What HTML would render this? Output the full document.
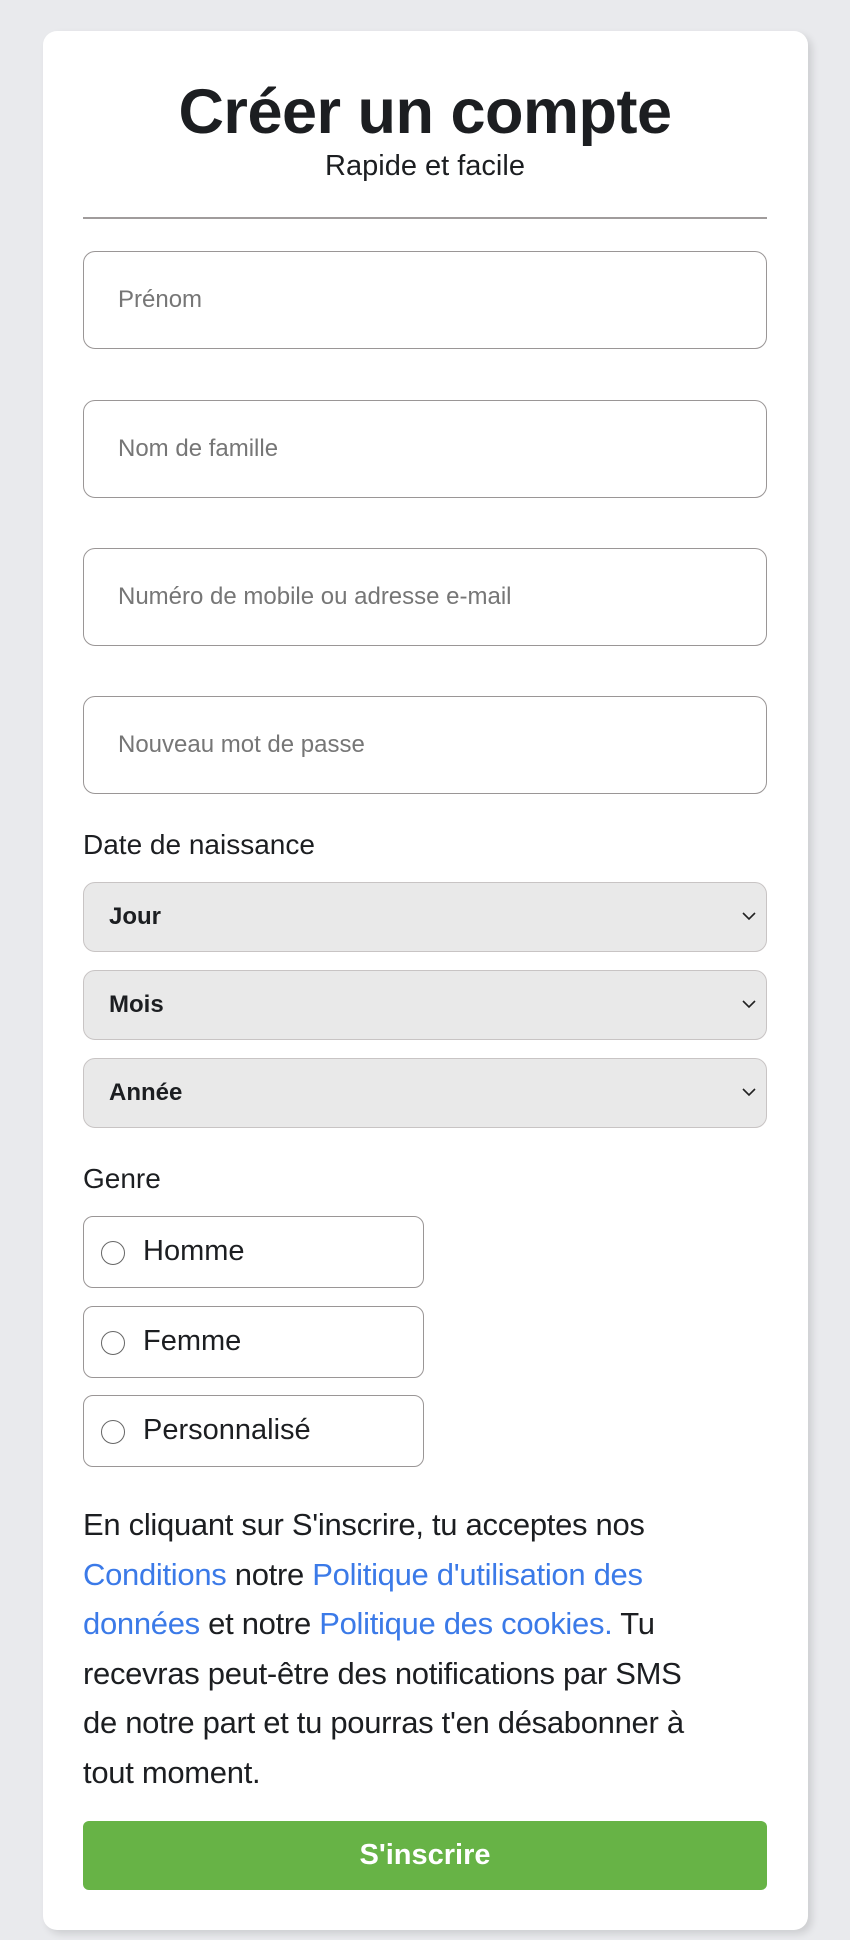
<!DOCTYPE html>
<html><head><meta charset="utf-8"><style>
*{box-sizing:border-box;margin:0;padding:0}
body{width:850px;height:1940px;background:#e9eaed;font-family:"Liberation Sans",sans-serif;color:#1c1e21;position:relative;overflow:hidden}
.card{position:absolute;left:43px;top:31px;width:765px;height:1899px;background:#fff;border-radius:14px;box-shadow:4px 4px 8px rgba(0,0,0,.12)}
.a{position:absolute}
h1{position:absolute;left:0;width:850px;top:76px;text-align:center;font-size:63px;font-weight:bold;letter-spacing:-0.5px}
.sub{left:0;width:850px;top:150px;text-align:center;font-size:29px}
.hr{left:83px;width:684px;top:217px;height:2px;background:#a09c9c}
.in{left:83px;width:684px;height:98px;border:1.5px solid #9a9696;border-radius:12px;font-size:24px;color:#767676;padding-left:34px;line-height:95px}
.lbl{left:83px;font-size:28px}
.sel{left:83px;width:684px;height:70px;background:#e9e9e9;border:1.5px solid #c8c4c4;border-radius:12px;font-size:24px;font-weight:bold;padding-left:25px;line-height:67px}
.sel svg{position:absolute;right:10px;top:28px}
.rad{left:83px;width:341px;height:72px;border:1.5px solid #9a9696;border-radius:10px;font-size:29px;line-height:69px;padding-left:59px}
.rad:before{content:"";position:absolute;left:17px;top:24px;width:22px;height:22px;border:1.5px solid #666;border-radius:50%}
.terms{left:83px;top:1500px;width:760px;font-size:31px;line-height:49.5px;white-space:nowrap;letter-spacing:-0.3px}
.terms span{color:#3b7ae8}
.btn{left:83px;top:1821px;width:684px;height:69px;background:#67b346;border-radius:6px;color:#fff;font-weight:bold;font-size:29px;text-align:center;line-height:69px}
</style></head><body>
<div class="card"></div>
<h1>Créer un compte</h1>
<div class="a sub">Rapide et facile</div>
<div class="a hr"></div>
<div class="a in" style="top:251px">Prénom</div>
<div class="a in" style="top:400px">Nom de famille</div>
<div class="a in" style="top:548px">Numéro de mobile ou adresse e-mail</div>
<div class="a in" style="top:696px">Nouveau mot de passe</div>
<div class="a lbl" style="top:829px">Date de naissance</div>
<div class="a sel" style="top:882px">Jour<svg width="14" height="10" viewBox="0 0 14 10"><path d="M1 2l6 6 6-6" fill="none" stroke="#222" stroke-width="1.6"/></svg></div>
<div class="a sel" style="top:970px">Mois<svg width="14" height="10" viewBox="0 0 14 10"><path d="M1 2l6 6 6-6" fill="none" stroke="#222" stroke-width="1.6"/></svg></div>
<div class="a sel" style="top:1058px">Année<svg width="14" height="10" viewBox="0 0 14 10"><path d="M1 2l6 6 6-6" fill="none" stroke="#222" stroke-width="1.6"/></svg></div>
<div class="a lbl" style="top:1163px">Genre</div>
<div class="a rad" style="top:1216px">Homme</div>
<div class="a rad" style="top:1306px">Femme</div>
<div class="a rad" style="top:1395px">Personnalisé</div>
<div class="a terms">En cliquant sur S'inscrire, tu acceptes nos<br><span>Conditions</span> notre <span>Politique d'utilisation des</span><br><span>données</span> et notre <span>Politique des cookies.</span> Tu<br>recevras peut-être des notifications par SMS<br>de notre part et tu pourras t'en désabonner à<br>tout moment.</div>
<div class="a btn">S'inscrire</div>
</body></html>
